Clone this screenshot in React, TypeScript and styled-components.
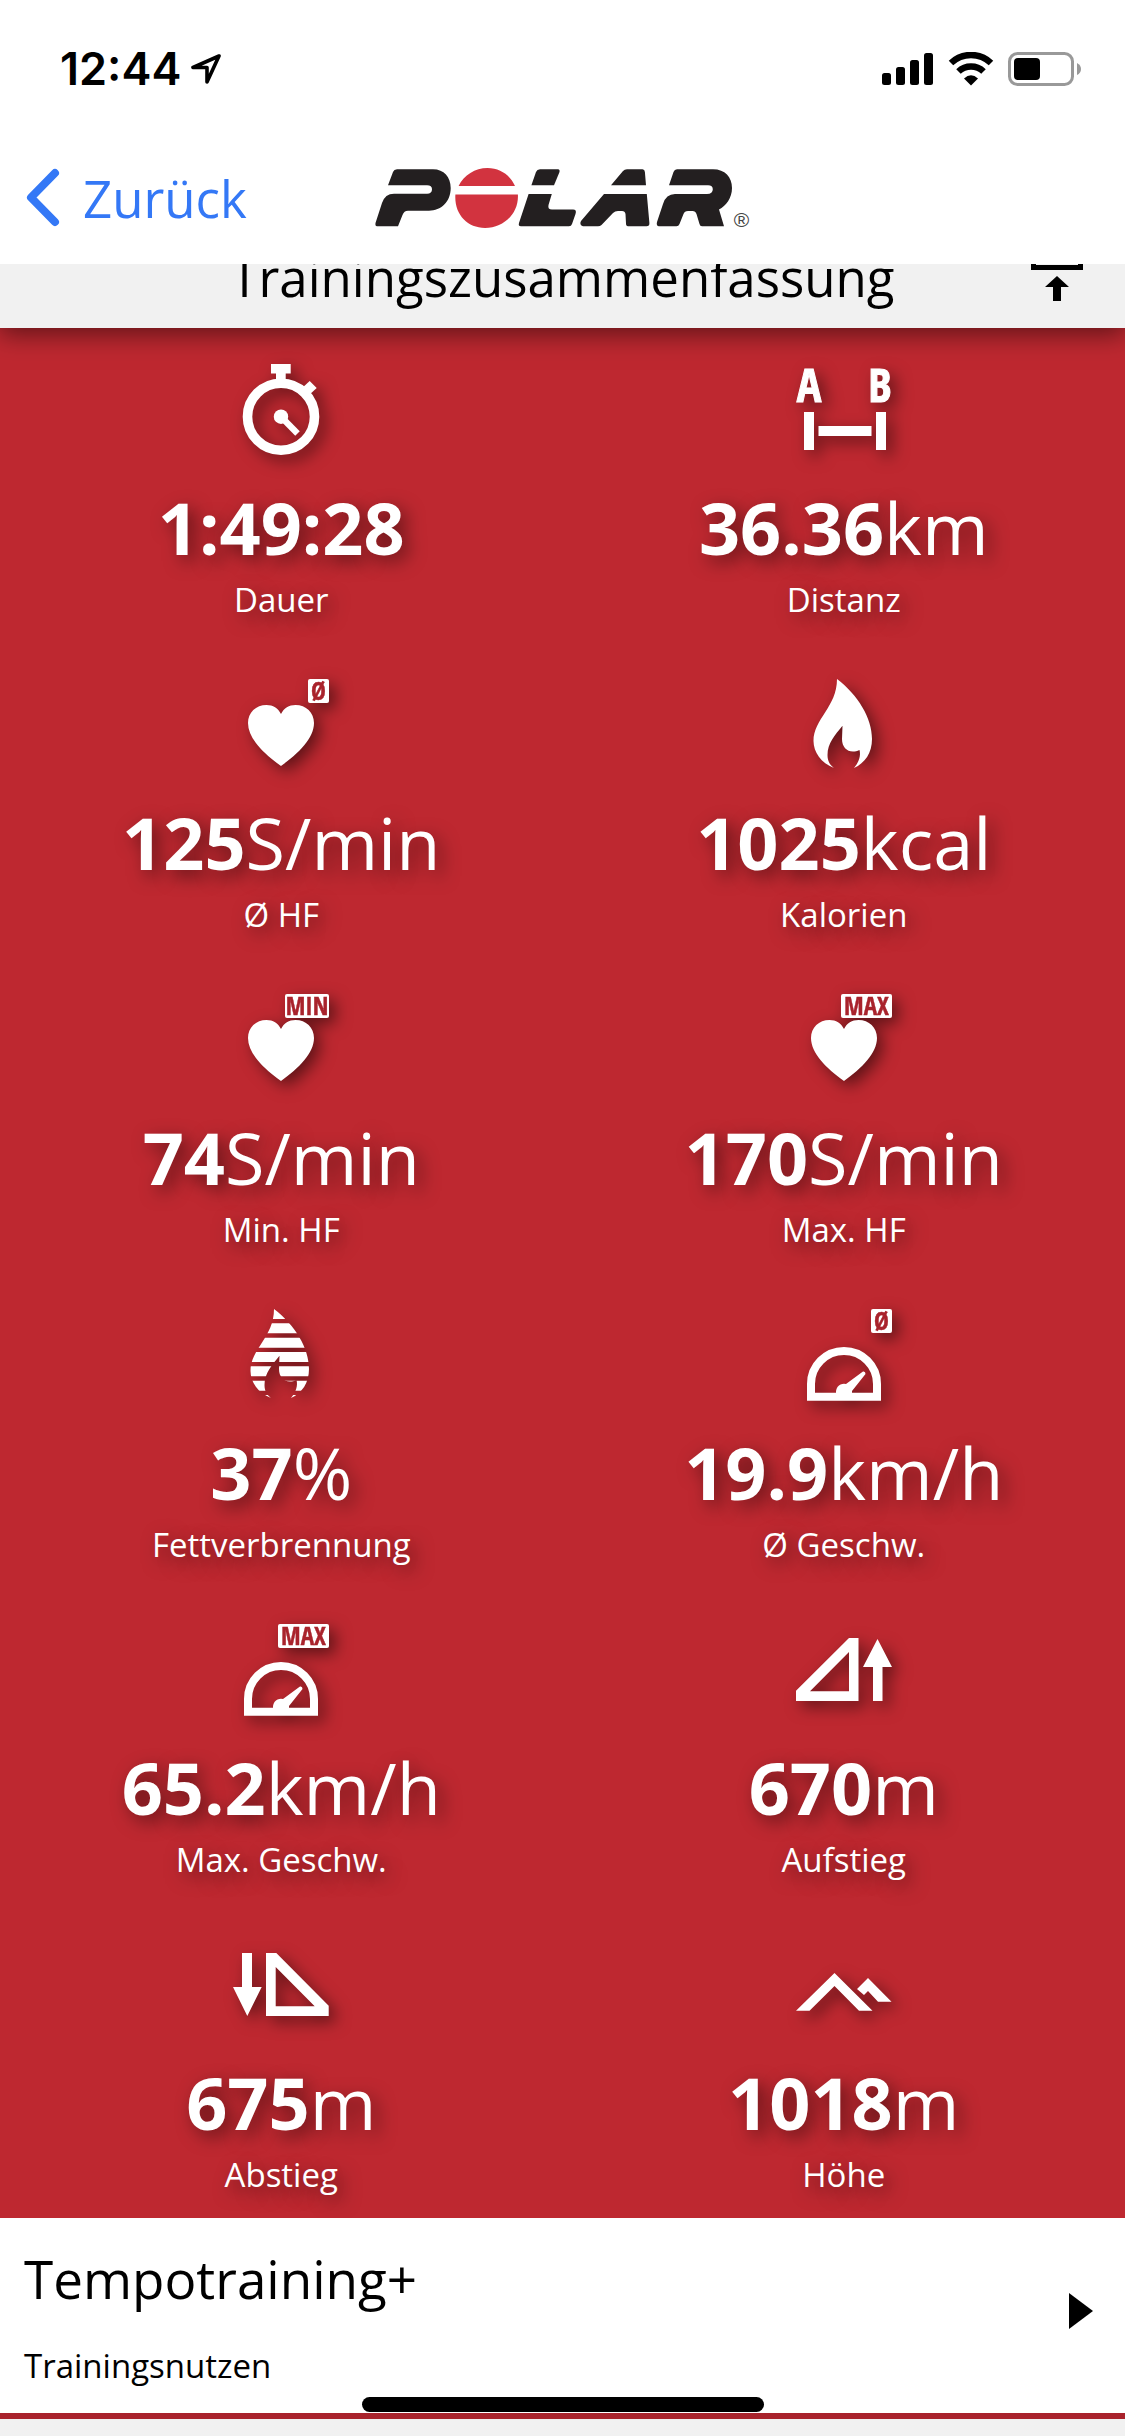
import React from 'react';
import styled, { createGlobalStyle } from 'styled-components';

const RED = '#be2830';
const DARK_RED = '#a9232c';
const BLUE = '#3478f6';
const GRAY = '#f1f1f1';

const GlobalStyle = createGlobalStyle`
  *, *::before, *::after { box-sizing: border-box; }
  body {
    margin: 0;
    background: ${GRAY};
    color: #000;
    font-family: 'Open Sans', 'Noto Sans', sans-serif;
  }
`;

const Page = styled.div`
  position: relative;
  display: flex;
  flex-direction: column;
  min-height: 100vh;
  overflow: hidden;
`;

const StatusBar = styled.div`
  display: flex;
  align-items: center;
  justify-content: space-between;
  height: 132px;
  padding: 6px 43px 0 60px;
  background: #fff;
`;

const StatusGroup = styled.div<{ $gap: number }>`
  display: flex;
  align-items: center;
  gap: ${(p) => p.$gap}px;
`;

const Clock = styled.time`
  font: 600 45px/56px Inter, sans-serif;
`;

const NavBar = styled.header`
  position: relative;
  z-index: 2;
  display: grid;
  grid-template-columns: 1fr auto 1fr;
  align-items: center;
  height: 132px;
  padding: 0 22px;
  background: #fff;
`;

const BackButton = styled.button`
  display: flex;
  align-items: center;
  justify-self: start;
  gap: 23px;
  padding: 0;
  border: 0;
  background: none;
  color: ${BLUE};
  font: 400 51px/70px 'Open Sans', 'Noto Sans', sans-serif;
  cursor: pointer;
`;

/* Scrolled partly under the navigation bar. */
const TitleBar = styled.div`
  position: relative;
  z-index: 1;
  display: grid;
  grid-template-columns: 1fr auto 1fr;
  align-items: end;
  margin-top: -35px;
  padding: 0 42px 16px;
  background: ${GRAY};
  box-shadow: 0 6px 24px rgba(0, 0, 0, 0.5);
`;

const Title = styled.h1`
  grid-column: 2;
  margin: 0;
  font-size: 51px;
  font-weight: 400;
  line-height: 70px;
`;

const TopButton = styled.button`
  display: flex;
  justify-self: end;
  padding: 0 0 11px;
  border: 0;
  background: none;
  color: #000;
  cursor: pointer;
`;

const Metrics = styled.ul`
  display: grid;
  grid-template-columns: 1fr 1fr;
  margin: 0;
  padding: 0;
  list-style: none;
  background: ${RED};
  color: #fff;
`;

const Metric = styled.li`
  display: flex;
  flex-direction: column;
  align-items: center;
  padding: 36px 0 19px;
  text-shadow: 6px 6px 18px rgba(0, 0, 0, 0.5);
`;

const MetricIcon = styled.svg`
  width: 96px;
  height: 96px;
  margin-bottom: 18px;
  overflow: visible;
  fill: #fff;
  filter: drop-shadow(6px 6px 8px rgba(0, 0, 0, 0.5));
  text-shadow: none;
`;

const Value = styled.strong`
  font-size: 72px;
  font-weight: 700;
  line-height: 98px;
`;

const Unit = styled.span`
  font-weight: 400;
`;

const Label = styled.span`
  font-size: 33px;
  line-height: 48px;
`;

const IconText = styled.text<{ $size: number; $color: string }>`
  fill: ${(p) => p.$color};
  font-family: 'Liberation Sans Narrow', 'Open Sans Condensed', Roboto, sans-serif;
  font-size: ${(p) => p.$size}px;
  font-weight: 700;
`;

const Benefit = styled.button`
  display: flex;
  align-items: center;
  justify-content: space-between;
  width: 100%;
  padding: 24px 32px 24px 24px;
  border: 0;
  border-bottom: 6px solid ${DARK_RED};
  background: #fff;
  color: #000;
  font-family: inherit;
  text-align: left;
  cursor: pointer;
`;

const BenefitText = styled.span`
  display: flex;
  flex-direction: column;
  gap: 27px;
`;

const BenefitTitle = styled.span`
  font-size: 53px;
  line-height: 74px;
`;

const BenefitLabel = styled.span`
  font-size: 33px;
  line-height: 46px;
`;

const Arrow = styled.svg`
  width: 24px;
  height: 36px;
  margin-bottom: 10px;
`;

const HomeIndicator = styled.div`
  position: absolute;
  bottom: 24px;
  left: 50%;
  width: 402px;
  height: 15px;
  border-radius: 8px;
  background: #000;
  transform: translateX(-50%);
`;

function Badge({ text }: { text: 'MIN' | 'MAX' | 'Ø' }) {
  const width = { MIN: 44, MAX: 51, Ø: 21 }[text];
  return (
    <>
      <rect x={96 - width} y="0" width={width} height="24" rx="2" />
      <IconText $size={25} $color={DARK_RED} stroke={DARK_RED} strokeWidth="0.400" x={96 - width / 2} y="21" textAnchor="middle">
        {text}
      </IconText>
    </>
  );
}

const Heart = () => (
  <path d="M48 35C45 29 40 26 33.500 26C23 26 15 33.500 15 44C15 59 30 74 48 87C66 74 81 59 81 44C81 33.500 73 26 62.500 26C56 26 51 29 48 35Z" />
);

const FLAME =
  'M41 0C62 16 76 39 76 60C76 74 69 84 58 89C63 83 65 77 63.500 71C54 75.500 46 70 46 60L46.500 46.700C39 56 31.500 64 31.500 76C31.500 82 34 86 38 89C25 84 17.500 73 17.500 62C17.500 40 41 28 41 0Z';

const Gauge = () => (
  <>
    <path d="M15 87.700V75A33 33 0 0 1 81 75V87.700Z" fill="none" stroke="#fff" strokeWidth="8" />
    <path d="M40 86V83A8 8 0 0 1 50 75L67 62.500Q69.500 62 69.500 65L56 82V86Z" />
  </>
);

const icons = {
  stopwatch: (
    <>
      <circle cx="48" cy="52.700" r="33.500" fill="none" stroke="#fff" strokeWidth="9.600" />
      <path d="M38 0H57.700V9.500H52.700V18H43V9.500H38Z" />
      <path d="M76.700 17L83.700 24L75 32L68 25Z" />
      <circle cx="48" cy="52.700" r="7.200" />
      <path d="M48 52.700L64.500 69.500" stroke="#fff" strokeWidth="6.300" />
    </>
  ),
  distance: (
    <>
      <IconText $size={46} $color="#fff" stroke="#fff" strokeWidth="1" x="13" y="38" textAnchor="middle">A</IconText>
      <IconText $size={46} $color="#fff" stroke="#fff" strokeWidth="1" x="84" y="38" textAnchor="middle">B</IconText>
      <path d="M8 48H18V86H8ZM22.500 62H75.500V72H22.500ZM80 48H90V86H80Z" />
    </>
  ),
  heartAvg: <><Heart /><Badge text="Ø" /></>,
  heartMin: <><Heart /><Badge text="MIN" /></>,
  heartMax: <><Heart /><Badge text="MAX" /></>,
  flame: <path d={FLAME} />,
  fat: (
    <>
      <clipPath id="fat-stripes">
        {[0, 1, 2, 3, 4, 5, 6].map((i) => (
          <rect key={i} x="0" y={i * 14.33} width="96" height="10" />
        ))}
      </clipPath>
      <path d={FLAME} clipPath="url(#fat-stripes)" />
    </>
  ),
  gaugeAvg: <><Gauge /><Badge text="Ø" /></>,
  gaugeMax: <><Gauge /><Badge text="MAX" /></>,
  ascent: (
    <>
      <path fillRule="evenodd" d="M0 66.700L53 14H62.500V77H0ZM14 67.300H53V28Z" />
      <path d="M81.500 15L96 43H86.500V77H77V43H67Z" />
    </>
  ),
  descent: (
    <>
      <path d="M9 14H19V48H28.700L14.300 77L0 48H9Z" />
      <path fillRule="evenodd" d="M33 14H43.300L95.700 66.700V77H33ZM42.700 28V67.300H81.700Z" />
    </>
  ),
  altitude: (
    <path d="M0 71.700L38.500 34L76.500 71.700H63L38.500 47L13.500 71.700ZM61 50L72 39L95.500 62.700H82L72 52L68 56Z" />
  ),
};

const metrics: { icon: keyof typeof icons; value: string; unit?: string; label: string }[] = [
  { icon: 'stopwatch', value: '1:49:28', label: 'Dauer' },
  { icon: 'distance', value: '36.36', unit: 'km', label: 'Distanz' },
  { icon: 'heartAvg', value: '125', unit: 'S/min', label: 'Ø HF' },
  { icon: 'flame', value: '1025', unit: 'kcal', label: 'Kalorien' },
  { icon: 'heartMin', value: '74', unit: 'S/min', label: 'Min. HF' },
  { icon: 'heartMax', value: '170', unit: 'S/min', label: 'Max. HF' },
  { icon: 'fat', value: '37', unit: '%', label: 'Fettverbrennung' },
  { icon: 'gaugeAvg', value: '19.9', unit: 'km/h', label: 'Ø Geschw.' },
  { icon: 'gaugeMax', value: '65.2', unit: 'km/h', label: 'Max. Geschw.' },
  { icon: 'ascent', value: '670', unit: 'm', label: 'Aufstieg' },
  { icon: 'descent', value: '675', unit: 'm', label: 'Abstieg' },
  { icon: 'altitude', value: '1018', unit: 'm', label: 'Höhe' },
];

const PolarLogo = () => (
  <svg width="375" height="60" viewBox="0 0 375 60" role="img" aria-label="Polar">
    <g fill="#231f20">
      <path d="M18 4Q19 1.300 22 1.300H58C69 1.300 75.700 9 75.700 20C75.700 34 66 42.700 54 42.700H33Q29 42.700 27.500 47L23 58.300H2Q0 58.300 .500 55L7 35Q10 25.700 19 25.700H52Q57 25.700 57 21.300Q57 17.300 52 17.300H13Z" />
      <path d="M161 4Q162 1.300 165 1.300H183Q185 1.300 184.500 4L179 17.300H156.400Z" />
      <path d="M153.600 26H176.800L173.500 37Q172.500 41.600 177 41.600H198Q202 41.600 200.500 46L197 56Q196.300 58.300 194 58.300H146Q143 58.300 144 55Z" />
      <path d="M248 3Q249.500 1.300 252 1.300H267.500Q269.700 1.300 269.900 4L271 17.300H236Z" />
      <path d="M229 26H271.800L274.400 55Q274.600 58.300 271.500 58.300H253Q251 58.300 251 55.500L250.500 46Q250 43 247 43H243Q240 43 238 45L226.500 57Q225 58.300 223 58.300H208Q204 57 206 53Z" />
      <path d="M298.500 4Q299.500 1.300 302 1.300H338C350 1.300 357 9 357 20C357 30 351 38 344 41.500L349 58.300H327Q325 58.300 324.500 56L321.500 46Q320.500 43 317.500 43H313Q309.500 43 308.500 46L304.500 56Q303.600 58.300 301.500 58.300H284Q281 58 282 54L288 36Q291 26 300 26H332Q337.800 26 337.800 21.300Q337.800 17.300 333 17.300H294Z" />
    </g>
    <path
      fill="#d2333f"
      d="M83.600 18C89 7 100 0 112.500 0C125 0 135 7 140 18ZM80.400 26.500H142.900C144 45 129 60 110 60C92 60 79 46 80.400 26.500Z"
    />
    <text x="366.500" y="59" textAnchor="middle" fontFamily="Liberation Sans, sans-serif" fontSize="21" fill="#444">®</text>
  </svg>
);

export default function App() {
  return (
    <Page>
      <GlobalStyle />
      <StatusBar>
        <StatusGroup $gap={10}>
          <Clock>12:44</Clock>
          <svg width="30" height="30" viewBox="0 0 30 30" fill="none" stroke="#000" strokeWidth="3.600" strokeLinejoin="round" aria-hidden="true">
            <path d="M28 2L2 13.500H16V28Z" />
          </svg>
        </StatusGroup>
        <StatusGroup $gap={14} aria-hidden="true">
          <svg width="52" height="34" viewBox="0 0 52 34">
            <rect x="0" y="21" width="9" height="12" rx="2.500" />
            <rect x="14" y="15" width="9" height="18" rx="2.500" />
            <rect x="28" y="8" width="9" height="25" rx="2.500" />
            <rect x="42" y="1" width="9" height="32" rx="2.500" />
          </svg>
          <svg width="46" height="34" viewBox="0 0 46 34">
            <path d="M3 11A29 29 0 0 1 43 11" fill="none" stroke="#000" strokeWidth="6.500" />
            <path d="M10.500 19.500A18 18 0 0 1 35.500 19.500" fill="none" stroke="#000" strokeWidth="6.500" />
            <path d="M16 26.500Q23 20 30 26.500L23 33.500Z" />
          </svg>
          <svg width="74" height="34" viewBox="0 0 74 34">
            <rect x="1.500" y="1.500" width="63" height="31" rx="8" fill="none" stroke="#999" strokeWidth="3" />
            <rect x="6" y="6" width="26" height="22" rx="4" />
            <path d="M69 11Q73 13 73 17T69 23Z" fill="#999" />
          </svg>
        </StatusGroup>
      </StatusBar>
      <NavBar>
        <BackButton type="button">
          <svg width="38" height="60" viewBox="0 0 38 60" fill="none" stroke={BLUE} strokeWidth="8" strokeLinecap="round" strokeLinejoin="round" aria-hidden="true">
            <path d="M33 5L9 29.500L33 54" />
          </svg>
          Zurück
        </BackButton>
        <PolarLogo />
      </NavBar>
      <TitleBar>
        <Title>Trainingszusammenfassung</Title>
        <TopButton type="button" aria-label="Nach oben">
          <svg width="52" height="72" viewBox="0 0 52 72" aria-hidden="true">
            <path d="M2.500 0V38.500H49.500V0" fill="none" stroke="#000" strokeWidth="5" />
            <path d="M26 47L38 58H30V72H22V58H14Z" />
          </svg>
        </TopButton>
      </TitleBar>
      <Metrics>
        {metrics.map((m) => (
          <Metric key={m.label}>
            <MetricIcon viewBox="0 0 96 96" aria-hidden="true">{icons[m.icon]}</MetricIcon>
            <Value>
              {m.value}
              {m.unit && <Unit>{m.unit}</Unit>}
            </Value>
            <Label>{m.label}</Label>
          </Metric>
        ))}
      </Metrics>
      <Benefit type="button">
        <BenefitText>
          <BenefitTitle>Tempotraining+</BenefitTitle>
          <BenefitLabel>Trainingsnutzen</BenefitLabel>
        </BenefitText>
        <Arrow viewBox="0 0 24 36" aria-hidden="true">
          <path d="M0 0L24 18L0 36Z" />
        </Arrow>
      </Benefit>
      <HomeIndicator />
    </Page>
  );
}
